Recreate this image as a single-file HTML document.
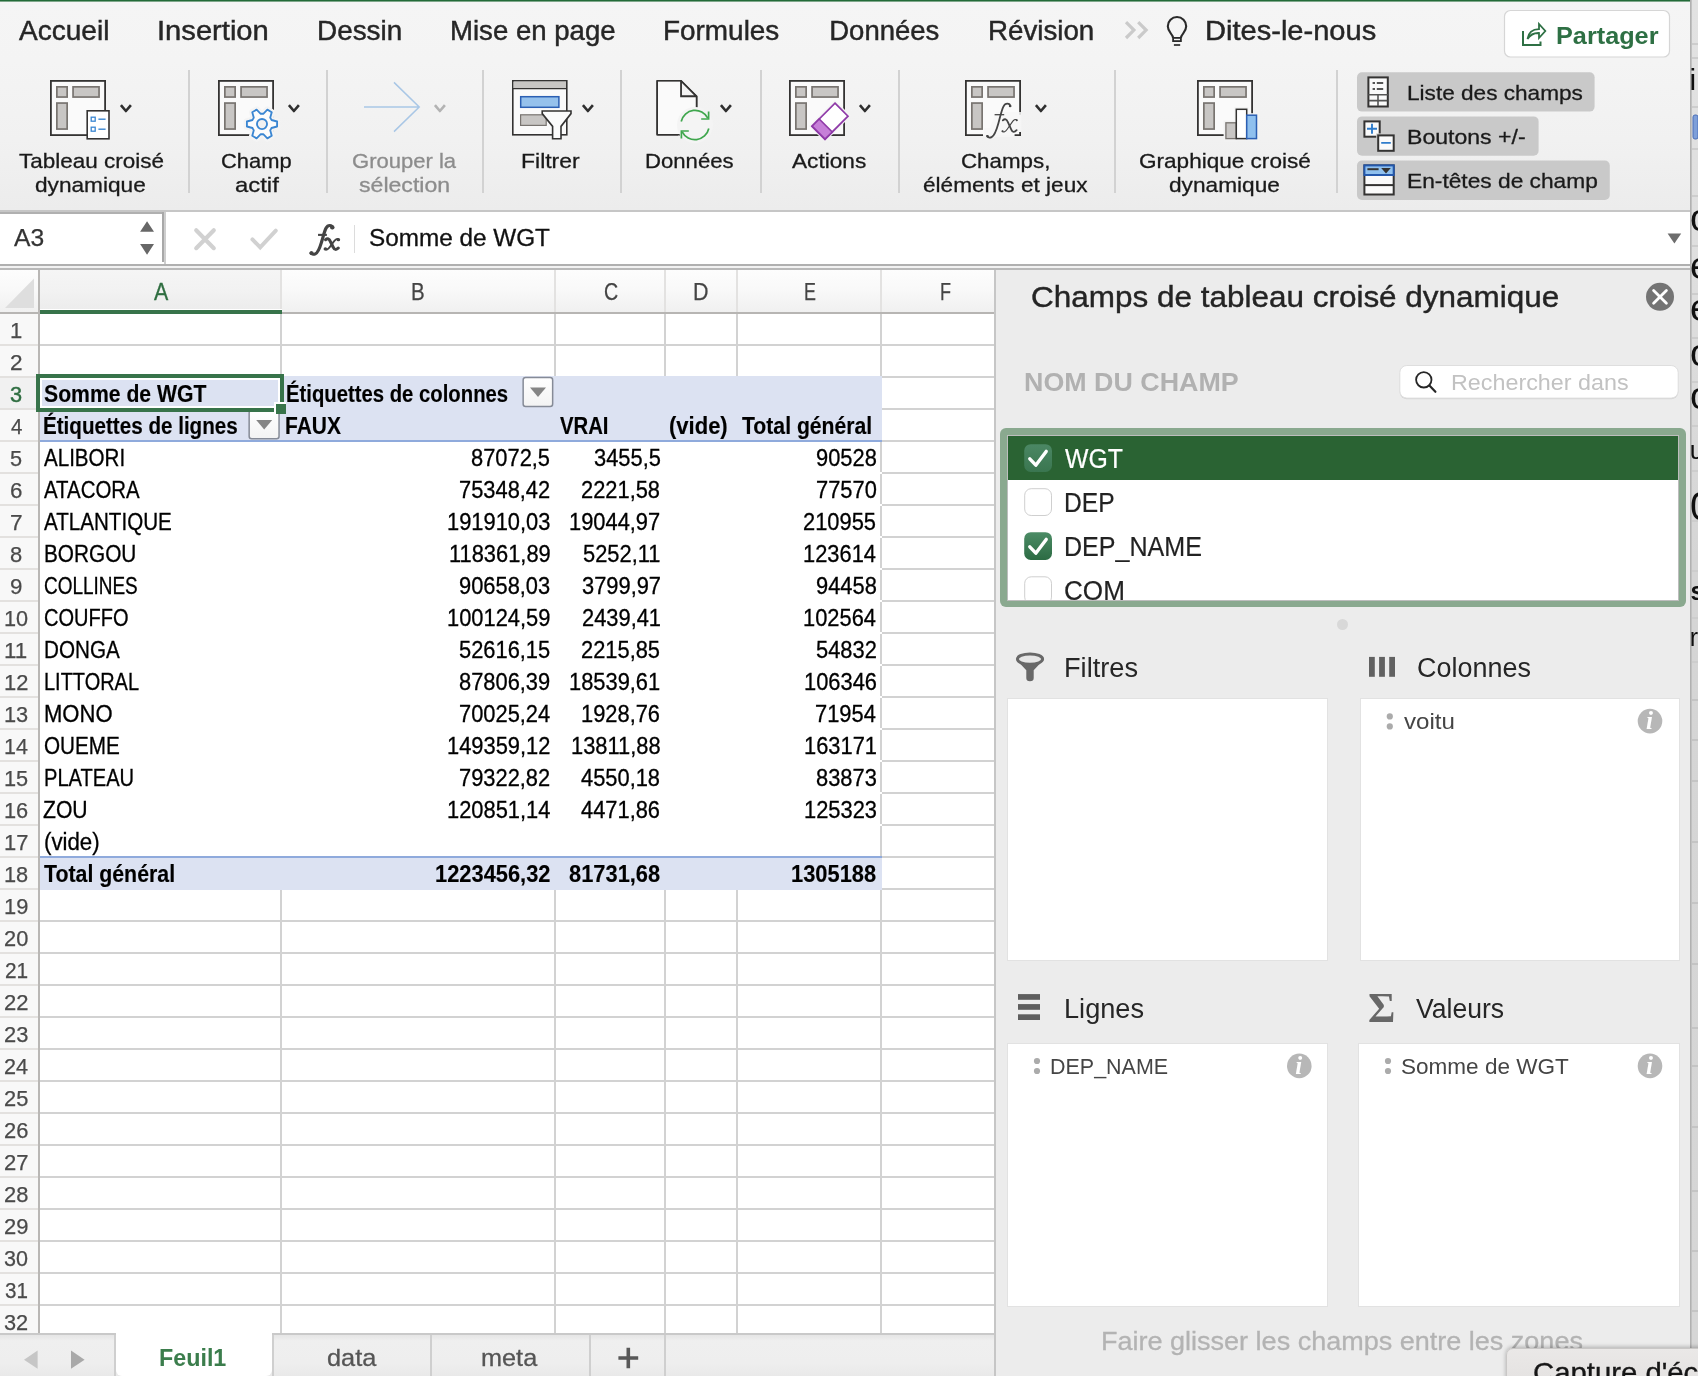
<!DOCTYPE html>
<html lang="fr"><head><meta charset="utf-8"><title>Excel</title>
<style>
html,body{margin:0;padding:0;}
body{width:1698px;height:1376px;overflow:hidden;background:#ececec;position:relative;font-family:"Liberation Sans",sans-serif;}
#root{position:absolute;left:0;top:0;width:1698px;height:1376px;overflow:hidden;will-change:transform;}
.a{position:absolute;box-sizing:border-box;}
.t{position:absolute;white-space:nowrap;line-height:1;transform-origin:0 0;font-family:"Liberation Sans",sans-serif;}
svg{overflow:visible;}
</style></head>
<body>
<div id="root">
<div class="a " style="left:1690px;top:0px;width:8px;height:1376px;background:linear-gradient(180deg,#e2e2e2 0px,#dedede 300px,#d5d5d5 560px,#d6d6d6 1376px);"></div>
<div class="a " style="left:1690px;top:0px;width:2px;height:1376px;background:linear-gradient(90deg,#a9a9a9,#c9c9c9);"></div>
<div class="a " style="left:0px;top:0px;width:1690px;height:211px;background:linear-gradient(180deg,#f5f5f5 0px,#f4f4f4 60px,#f1f1f1 140px,#ececec 209px);"></div>
<div class="a " style="left:0px;top:0px;width:1690px;height:1px;background:#236b39;"></div>
<div class="a " style="left:0px;top:1px;width:1690px;height:1px;background:#7fa88b;"></div>
<div class="a " style="left:0px;top:210px;width:1690px;height:2px;background:#c6c6c6;"></div>
<div class="a " style="left:0px;top:212px;width:1690px;height:52px;background:#ffffff;"></div>
<div class="a " style="left:0px;top:264px;width:1690px;height:2px;background:#b0b0b0;"></div>
<div class="a " style="left:0px;top:266px;width:1690px;height:2px;background:#f2f2f2;"></div>
<div class="a " style="left:0px;top:268px;width:1690px;height:2px;background:#b9b9b9;"></div>
<div class="a " style="left:0px;top:212px;width:164px;height:2px;background:#b0b0b0;"></div>
<div class="a " style="left:162px;top:212px;width:2px;height:50px;background:#a8a8a8;"></div>
<div class="a " style="left:164px;top:212px;width:2px;height:52px;background:#cecece;"></div>
<div class="a " style="left:354px;top:225px;width:1px;height:28px;background:#dcdcdc;"></div>
<div class="a " style="left:0px;top:270px;width:996px;height:1063px;background:#ffffff;"></div>
<div class="a " style="left:0px;top:270px;width:994px;height:42px;background:linear-gradient(180deg,#fdfdfd 0%,#f9f9f9 45%,#f0f0f0 100%);"></div>
<div class="a " style="left:40px;top:270px;width:240px;height:40px;background:linear-gradient(180deg,#f5f5f5 0%,#f2f2f2 50%,#ececec 100%);"></div>
<div class="a " style="left:0px;top:314px;width:38px;height:1019px;background:#f8f8f8;"></div>
<div class="a " style="left:0px;top:378px;width:38px;height:30px;background:#f1f1f1;"></div>
<div class="a " style="left:0px;top:344px;width:38px;height:2px;background:#e3e1df;"></div>
<div class="a " style="left:40px;top:344px;width:954px;height:2px;background:#d2d2d2;"></div>
<div class="a " style="left:0px;top:376px;width:38px;height:2px;background:#e3e1df;"></div>
<div class="a " style="left:40px;top:376px;width:954px;height:2px;background:#d2d2d2;"></div>
<div class="a " style="left:0px;top:408px;width:38px;height:2px;background:#e3e1df;"></div>
<div class="a " style="left:882px;top:408px;width:112px;height:2px;background:#d2d2d2;"></div>
<div class="a " style="left:0px;top:440px;width:38px;height:2px;background:#e3e1df;"></div>
<div class="a " style="left:882px;top:440px;width:112px;height:2px;background:#d2d2d2;"></div>
<div class="a " style="left:0px;top:472px;width:38px;height:2px;background:#e3e1df;"></div>
<div class="a " style="left:882px;top:472px;width:112px;height:2px;background:#d2d2d2;"></div>
<div class="a " style="left:0px;top:504px;width:38px;height:2px;background:#e3e1df;"></div>
<div class="a " style="left:882px;top:504px;width:112px;height:2px;background:#d2d2d2;"></div>
<div class="a " style="left:0px;top:536px;width:38px;height:2px;background:#e3e1df;"></div>
<div class="a " style="left:882px;top:536px;width:112px;height:2px;background:#d2d2d2;"></div>
<div class="a " style="left:0px;top:568px;width:38px;height:2px;background:#e3e1df;"></div>
<div class="a " style="left:882px;top:568px;width:112px;height:2px;background:#d2d2d2;"></div>
<div class="a " style="left:0px;top:600px;width:38px;height:2px;background:#e3e1df;"></div>
<div class="a " style="left:882px;top:600px;width:112px;height:2px;background:#d2d2d2;"></div>
<div class="a " style="left:0px;top:632px;width:38px;height:2px;background:#e3e1df;"></div>
<div class="a " style="left:882px;top:632px;width:112px;height:2px;background:#d2d2d2;"></div>
<div class="a " style="left:0px;top:664px;width:38px;height:2px;background:#e3e1df;"></div>
<div class="a " style="left:882px;top:664px;width:112px;height:2px;background:#d2d2d2;"></div>
<div class="a " style="left:0px;top:696px;width:38px;height:2px;background:#e3e1df;"></div>
<div class="a " style="left:882px;top:696px;width:112px;height:2px;background:#d2d2d2;"></div>
<div class="a " style="left:0px;top:728px;width:38px;height:2px;background:#e3e1df;"></div>
<div class="a " style="left:882px;top:728px;width:112px;height:2px;background:#d2d2d2;"></div>
<div class="a " style="left:0px;top:760px;width:38px;height:2px;background:#e3e1df;"></div>
<div class="a " style="left:882px;top:760px;width:112px;height:2px;background:#d2d2d2;"></div>
<div class="a " style="left:0px;top:792px;width:38px;height:2px;background:#e3e1df;"></div>
<div class="a " style="left:882px;top:792px;width:112px;height:2px;background:#d2d2d2;"></div>
<div class="a " style="left:0px;top:824px;width:38px;height:2px;background:#e3e1df;"></div>
<div class="a " style="left:882px;top:824px;width:112px;height:2px;background:#d2d2d2;"></div>
<div class="a " style="left:0px;top:856px;width:38px;height:2px;background:#e3e1df;"></div>
<div class="a " style="left:882px;top:856px;width:112px;height:2px;background:#d2d2d2;"></div>
<div class="a " style="left:0px;top:888px;width:38px;height:2px;background:#e3e1df;"></div>
<div class="a " style="left:40px;top:888px;width:954px;height:2px;background:#d2d2d2;"></div>
<div class="a " style="left:0px;top:920px;width:38px;height:2px;background:#e3e1df;"></div>
<div class="a " style="left:40px;top:920px;width:954px;height:2px;background:#d2d2d2;"></div>
<div class="a " style="left:0px;top:952px;width:38px;height:2px;background:#e3e1df;"></div>
<div class="a " style="left:40px;top:952px;width:954px;height:2px;background:#d2d2d2;"></div>
<div class="a " style="left:0px;top:984px;width:38px;height:2px;background:#e3e1df;"></div>
<div class="a " style="left:40px;top:984px;width:954px;height:2px;background:#d2d2d2;"></div>
<div class="a " style="left:0px;top:1016px;width:38px;height:2px;background:#e3e1df;"></div>
<div class="a " style="left:40px;top:1016px;width:954px;height:2px;background:#d2d2d2;"></div>
<div class="a " style="left:0px;top:1048px;width:38px;height:2px;background:#e3e1df;"></div>
<div class="a " style="left:40px;top:1048px;width:954px;height:2px;background:#d2d2d2;"></div>
<div class="a " style="left:0px;top:1080px;width:38px;height:2px;background:#e3e1df;"></div>
<div class="a " style="left:40px;top:1080px;width:954px;height:2px;background:#d2d2d2;"></div>
<div class="a " style="left:0px;top:1112px;width:38px;height:2px;background:#e3e1df;"></div>
<div class="a " style="left:40px;top:1112px;width:954px;height:2px;background:#d2d2d2;"></div>
<div class="a " style="left:0px;top:1144px;width:38px;height:2px;background:#e3e1df;"></div>
<div class="a " style="left:40px;top:1144px;width:954px;height:2px;background:#d2d2d2;"></div>
<div class="a " style="left:0px;top:1176px;width:38px;height:2px;background:#e3e1df;"></div>
<div class="a " style="left:40px;top:1176px;width:954px;height:2px;background:#d2d2d2;"></div>
<div class="a " style="left:0px;top:1208px;width:38px;height:2px;background:#e3e1df;"></div>
<div class="a " style="left:40px;top:1208px;width:954px;height:2px;background:#d2d2d2;"></div>
<div class="a " style="left:0px;top:1240px;width:38px;height:2px;background:#e3e1df;"></div>
<div class="a " style="left:40px;top:1240px;width:954px;height:2px;background:#d2d2d2;"></div>
<div class="a " style="left:0px;top:1272px;width:38px;height:2px;background:#e3e1df;"></div>
<div class="a " style="left:40px;top:1272px;width:954px;height:2px;background:#d2d2d2;"></div>
<div class="a " style="left:0px;top:1304px;width:38px;height:2px;background:#e3e1df;"></div>
<div class="a " style="left:40px;top:1304px;width:954px;height:2px;background:#d2d2d2;"></div>
<div class="a " style="left:280px;top:270px;width:2px;height:42px;background:#e3e2e1;"></div>
<div class="a " style="left:280px;top:314px;width:2px;height:62px;background:#d2d2d2;"></div>
<div class="a " style="left:280px;top:890px;width:2px;height:443px;background:#d2d2d2;"></div>
<div class="a " style="left:554px;top:270px;width:2px;height:42px;background:#e3e2e1;"></div>
<div class="a " style="left:554px;top:314px;width:2px;height:62px;background:#d2d2d2;"></div>
<div class="a " style="left:554px;top:890px;width:2px;height:443px;background:#d2d2d2;"></div>
<div class="a " style="left:664px;top:270px;width:2px;height:42px;background:#e3e2e1;"></div>
<div class="a " style="left:664px;top:314px;width:2px;height:62px;background:#d2d2d2;"></div>
<div class="a " style="left:664px;top:890px;width:2px;height:443px;background:#d2d2d2;"></div>
<div class="a " style="left:736px;top:270px;width:2px;height:42px;background:#e3e2e1;"></div>
<div class="a " style="left:736px;top:314px;width:2px;height:62px;background:#d2d2d2;"></div>
<div class="a " style="left:736px;top:890px;width:2px;height:443px;background:#d2d2d2;"></div>
<div class="a " style="left:880px;top:270px;width:2px;height:42px;background:#e3e2e1;"></div>
<div class="a " style="left:880px;top:314px;width:2px;height:62px;background:#d2d2d2;"></div>
<div class="a " style="left:880px;top:890px;width:2px;height:443px;background:#d2d2d2;"></div>
<div class="a " style="left:880px;top:442px;width:2px;height:416px;background:#d2d2d2;"></div>
<div class="a " style="left:880px;top:472px;width:2px;height:2px;background:#ffffff;"></div>
<div class="a " style="left:880px;top:504px;width:2px;height:2px;background:#ffffff;"></div>
<div class="a " style="left:880px;top:536px;width:2px;height:2px;background:#ffffff;"></div>
<div class="a " style="left:880px;top:568px;width:2px;height:2px;background:#ffffff;"></div>
<div class="a " style="left:880px;top:600px;width:2px;height:2px;background:#ffffff;"></div>
<div class="a " style="left:880px;top:632px;width:2px;height:2px;background:#ffffff;"></div>
<div class="a " style="left:880px;top:664px;width:2px;height:2px;background:#ffffff;"></div>
<div class="a " style="left:880px;top:696px;width:2px;height:2px;background:#ffffff;"></div>
<div class="a " style="left:880px;top:728px;width:2px;height:2px;background:#ffffff;"></div>
<div class="a " style="left:880px;top:760px;width:2px;height:2px;background:#ffffff;"></div>
<div class="a " style="left:880px;top:792px;width:2px;height:2px;background:#ffffff;"></div>
<div class="a " style="left:880px;top:824px;width:2px;height:2px;background:#ffffff;"></div>
<div class="a " style="left:0px;top:312px;width:994px;height:2px;background:#b7b5b3;"></div>
<div class="a " style="left:38px;top:270px;width:2px;height:1063px;background:#b9b7b5;"></div>
<div class="a " style="left:994px;top:270px;width:2px;height:1106px;background:#c6c6c6;"></div>
<svg class="a" style="left:0px;top:270px;" width="40" height="42" viewBox="0 0 40 42"><path d="M34 8.5 L34 38 L5 38 Z" fill="#dedede"/></svg>
<div class="a " style="left:40px;top:376px;width:842px;height:65px;background:#dce2f2;"></div>
<div class="a " style="left:40px;top:857px;width:842px;height:33px;background:#dce2f2;"></div>
<div class="a " style="left:40px;top:440px;width:842px;height:2px;background:#8faadc;"></div>
<div class="a " style="left:40px;top:856px;width:842px;height:2px;background:#8faadc;"></div>
<div class="a " style="left:40px;top:309px;width:242px;height:1px;background:#ffffff;"></div>
<div class="a " style="left:40px;top:310px;width:242px;height:4px;background:#37734a;"></div>
<div class="a " style="left:0px;top:1333px;width:994px;height:43px;background:linear-gradient(180deg,#e2e2e2 0px,#efefef 8px,#eeeeee 30px,#e9e9e9 43px);"></div>
<div class="a " style="left:0px;top:1333px;width:994px;height:2px;background:#c9c9c9;"></div>
<div class="a " style="left:116px;top:1333px;width:156px;height:43px;background:#ffffff;border-radius:0 0 6px 6px;"></div>
<div class="a " style="left:114px;top:1335px;width:2px;height:41px;background:#cfcfcf;"></div>
<div class="a " style="left:272px;top:1335px;width:2px;height:41px;background:#cfcfcf;"></div>
<div class="a " style="left:430px;top:1335px;width:2px;height:41px;background:#cfcfcf;"></div>
<div class="a " style="left:589px;top:1335px;width:2px;height:41px;background:#cfcfcf;"></div>
<div class="a " style="left:664px;top:1335px;width:2px;height:41px;background:#cfcfcf;"></div>
<div class="a " style="left:996px;top:270px;width:694px;height:1106px;background:#ececec;"></div>
<div class="a " style="left:1000px;top:428px;width:686px;height:179px;background:#8aa98f;border-radius:6px;"></div>
<div class="a " style="left:1007px;top:435px;width:672px;height:166px;background:#ffffff;border:1px solid #bdbdbd;"></div>
<div class="a " style="left:1008px;top:436px;width:670px;height:44px;background:#2a6333;"></div>
<div class="a " style="left:1007px;top:698px;width:321px;height:263px;background:#ffffff;border:1px solid #e2e2e2;"></div>
<div class="a " style="left:1360px;top:698px;width:320px;height:263px;background:#ffffff;border:1px solid #e2e2e2;"></div>
<div class="a " style="left:1007px;top:1043px;width:321px;height:264px;background:#ffffff;border:1px solid #e2e2e2;"></div>
<div class="a " style="left:1358px;top:1043px;width:322px;height:264px;background:#ffffff;border:1px solid #e2e2e2;"></div>
<div class="a " style="left:1337px;top:619px;width:11px;height:11px;background:#d8d8d8;border-radius:50%;"></div>
<svg class="a" style="left:0;top:0;pointer-events:none" width="1698" height="1376" viewBox="0 0 1698 1376"><path d="M1126 22.2 L1133.9 30.1 L1126 38 M1138.2 22.2 L1146.1 30.1 L1138.2 38" fill="none" stroke="#cacaca" stroke-width="3.2" stroke-linejoin="miter"/>
<path d="M1173.1 37.9 C1173.1 34 1167.8 32.6 1167.8 26.3 A9.2 9.2 0 1 1 1186.2 26.3 C1186.2 32.6 1180.9 34 1180.9 37.9" fill="none" stroke="#2a2a2a" stroke-width="2.1"/>
<rect x="1173.1" y="37.9" width="7.8" height="3.2" fill="none" stroke="#2a2a2a" stroke-width="1.8"/>
<path d="M1173.9 45 H1180.2" stroke="#2a2a2a" stroke-width="1.7" fill="none"/>
<rect x="1504.5" y="10.5" width="165" height="46.5" rx="6" fill="#ffffff" stroke="#d6d6d6" stroke-width="1.2"/>
<path d="M1523 31 V45 H1540.5 V41.5" fill="none" stroke="#2e7044" stroke-width="2"/>
<path d="M1527.5 39 C1528.5 32.5 1533 29.3 1539 29.2 V24 L1545.3 31 L1539 38 V33 C1534 32.8 1530.3 34.5 1527.5 39 Z" fill="none" stroke="#2e7044" stroke-width="1.8" stroke-linejoin="miter"/>
<rect x="188" y="70" width="2" height="123" fill="#d2d2d2"/>
<rect x="326" y="70" width="2" height="123" fill="#d2d2d2"/>
<rect x="482" y="70" width="2" height="123" fill="#d2d2d2"/>
<rect x="620" y="70" width="2" height="123" fill="#d2d2d2"/>
<rect x="760" y="70" width="2" height="123" fill="#d2d2d2"/>
<rect x="898" y="70" width="2" height="123" fill="#d2d2d2"/>
<rect x="1114" y="70" width="2" height="123" fill="#d2d2d2"/>
<rect x="1336" y="70" width="2" height="123" fill="#d2d2d2"/>
<rect x="50.9" y="80.9" width="54.2" height="54.2" fill="#fafafa"/>
<rect x="50.9" y="80.9" width="54.2" height="54.2" fill="none" stroke="#343332" stroke-width="1.8"/>
<rect x="56.85" y="86.85" width="10.3" height="10.2" fill="#c8c6c4" stroke="#787470" stroke-width="1.7"/>
<rect x="73.05" y="86.85" width="26" height="10.2" fill="#c8c6c4" stroke="#787470" stroke-width="1.7"/>
<rect x="56.85" y="103.05" width="10.3" height="26" fill="#c8c6c4" stroke="#787470" stroke-width="1.7"/>
<rect x="87.2" y="110.8" width="21.8" height="28" fill="#ffffff" stroke="#343332" stroke-width="1.6"/>
<rect x="91.2" y="117.2" width="4" height="4" fill="#fff" stroke="#3a86d2" stroke-width="1.3"/>
<path d="M98.4 119.2 H105.6" stroke="#3a86d2" stroke-width="1.4"/>
<rect x="91.2" y="127.2" width="4" height="4" fill="#fff" stroke="#3a86d2" stroke-width="1.3"/>
<path d="M98.4 129.2 H105.6" stroke="#3a86d2" stroke-width="1.4"/>
<path d="M120.9 105.1 L125.9 111 L130.9 105.1" fill="none" stroke="#2f2f2f" stroke-width="2.6" stroke-linecap="butt" stroke-linejoin="round"/>
<rect x="218.9" y="80.9" width="54.2" height="54.2" fill="#fafafa"/>
<rect x="218.9" y="80.9" width="54.2" height="54.2" fill="none" stroke="#343332" stroke-width="1.8"/>
<rect x="224.85" y="86.85" width="10.3" height="10.2" fill="#c8c6c4" stroke="#787470" stroke-width="1.7"/>
<rect x="241.05" y="86.85" width="26" height="10.2" fill="#c8c6c4" stroke="#787470" stroke-width="1.7"/>
<rect x="224.85" y="103.05" width="10.3" height="26" fill="#c8c6c4" stroke="#787470" stroke-width="1.7"/>
<path d="M271.49 119.99 L277.09 121.49 L277.09 126.51 L271.49 128.01 A10.3 10.3 0 0 1 270.22 130.21 L271.72 135.81 L267.37 138.33 L263.27 134.22 A10.3 10.3 0 0 1 260.73 134.22 L256.63 138.33 L252.28 135.81 L253.78 130.21 A10.3 10.3 0 0 1 252.51 128.01 L246.91 126.51 L246.91 121.49 L252.51 119.99 A10.3 10.3 0 0 1 253.78 117.79 L252.28 112.19 L256.63 109.67 L260.73 113.78 A10.3 10.3 0 0 1 263.27 113.78 L267.37 109.67 L271.72 112.19 L270.22 117.79 A10.3 10.3 0 0 1 271.49 119.99Z" fill="#f4f4f4" stroke="#f4f4f4" stroke-width="6.5" stroke-linejoin="round"/>
<path d="M271.49 119.99 L277.09 121.49 L277.09 126.51 L271.49 128.01 A10.3 10.3 0 0 1 270.22 130.21 L271.72 135.81 L267.37 138.33 L263.27 134.22 A10.3 10.3 0 0 1 260.73 134.22 L256.63 138.33 L252.28 135.81 L253.78 130.21 A10.3 10.3 0 0 1 252.51 128.01 L246.91 126.51 L246.91 121.49 L252.51 119.99 A10.3 10.3 0 0 1 253.78 117.79 L252.28 112.19 L256.63 109.67 L260.73 113.78 A10.3 10.3 0 0 1 263.27 113.78 L267.37 109.67 L271.72 112.19 L270.22 117.79 A10.3 10.3 0 0 1 271.49 119.99Z" fill="#fcfcfc" stroke="#3a86d2" stroke-width="1.85" stroke-linejoin="round"/>
<circle cx="262" cy="124" r="5.05" fill="#f1f1f1" stroke="#3a86d2" stroke-width="1.85"/>
<path d="M288.9 105.1 L293.9 111 L298.9 105.1" fill="none" stroke="#2f2f2f" stroke-width="2.6" stroke-linecap="butt" stroke-linejoin="round"/>
<path d="M364 107 H419 M394 82.4 L419.2 107 L394 131.6" fill="none" stroke="#a9c7e6" stroke-width="1.5"/>
<path d="M434.9 105.1 L439.9 111 L444.9 105.1" fill="none" stroke="#b3b3b3" stroke-width="2.6" stroke-linecap="butt" stroke-linejoin="round"/>
<rect x="512.8" y="80.8" width="54" height="54" fill="#fafafa" stroke="#343332" stroke-width="1.6"/>
<rect x="513.6" y="81.6" width="52.4" height="6.4" fill="#c8c6c4"/>
<path d="M512.8 88.6 H566.8" stroke="#343332" stroke-width="1.3"/>
<rect x="520.7" y="96.7" width="38.2" height="10.6" fill="#95c1ec" stroke="#2b5fb3" stroke-width="1.5"/>
<rect x="520.6" y="114.8" width="25.6" height="10.6" fill="#c8c6c4" stroke="#787470" stroke-width="1.2"/>
<path d="M542.2 111 H571 V113.6 L561 126.4 V138.8 H552.6 V126.4 L542.2 113.6 Z" fill="#fbfbfb" stroke="#343332" stroke-width="1.6" stroke-linejoin="miter"/>
<path d="M582.9 105.1 L587.9 111 L592.9 105.1" fill="none" stroke="#2f2f2f" stroke-width="2.6" stroke-linecap="butt" stroke-linejoin="round"/>
<path d="M657.2 80.8 H681 L696.6 96.4 V123 M681 80.8 V96.4 H696.6 M678 134.8 H657.2 V80.8" fill="none" stroke="#343332" stroke-width="1.6"/>
<path d="M658 81.6 H680.6 V96.8 H695.8 V134 H658 Z" fill="#fafafa"/>
<path d="M657.2 134.8 V80.8 H681 L696.6 96.4 V112 M681 80.8 V96.4 H696.6 M680 134.8 H657.2" fill="none" stroke="#343332" stroke-width="1.6"/>
<circle cx="695" cy="125" r="18" fill="#f4f4f4"/>
<path d="M681.2 121.5 A14.2 14.2 0 0 1 707.8 118.2" fill="none" stroke="#3fa64d" stroke-width="1.7"/>
<path d="M708.8 128.5 A14.2 14.2 0 0 1 682.2 131.8" fill="none" stroke="#3fa64d" stroke-width="1.7"/>
<path d="M708.6 111.6 V119 H701.2" fill="none" stroke="#3fa64d" stroke-width="1.7"/>
<path d="M681.4 138.4 V131 H688.8" fill="none" stroke="#3fa64d" stroke-width="1.7"/>
<path d="M720.9 105.1 L725.9 111 L730.9 105.1" fill="none" stroke="#2f2f2f" stroke-width="2.6" stroke-linecap="butt" stroke-linejoin="round"/>
<rect x="789.9" y="80.9" width="54.2" height="54.2" fill="#fafafa"/>
<rect x="789.9" y="80.9" width="54.2" height="54.2" fill="none" stroke="#343332" stroke-width="1.8"/>
<rect x="795.85" y="86.85" width="10.3" height="10.2" fill="#c8c6c4" stroke="#787470" stroke-width="1.7"/>
<rect x="812.05" y="86.85" width="26" height="10.2" fill="#c8c6c4" stroke="#787470" stroke-width="1.7"/>
<rect x="795.85" y="103.05" width="10.3" height="26" fill="#c8c6c4" stroke="#787470" stroke-width="1.7"/>
<path d="M835 100 L851 116 L825 142 L809 126 Z" fill="#f4f4f4"/>
<path d="M835 103.2 L848 116.2 L825 139.2 L812 126.2 Z" fill="#ffffff" stroke="#8f3aa8" stroke-width="1.7" stroke-linejoin="miter"/>
<path d="M819.2 119 L832.2 132 L825 139.2 L812 126.2 Z" fill="#c67fd8" stroke="#8f3aa8" stroke-width="1.7" stroke-linejoin="miter"/>
<path d="M859.9 105.1 L864.9 111 L869.9 105.1" fill="none" stroke="#2f2f2f" stroke-width="2.6" stroke-linecap="butt" stroke-linejoin="round"/>
<rect x="965.9" y="80.9" width="54.2" height="54.2" fill="#fafafa"/>
<path d="M983 135.1 H965.9 V80.9 H1020.1 V114.7 M1020.1 132 V135.1 H1014.6" fill="none" stroke="#343332" stroke-width="1.8"/>
<rect x="971.85" y="86.85" width="10.3" height="10.2" fill="#c8c6c4" stroke="#787470" stroke-width="1.7"/>
<rect x="988.05" y="86.85" width="26" height="10.2" fill="#c8c6c4" stroke="#787470" stroke-width="1.7"/>
<rect x="971.85" y="103.05" width="10.3" height="26" fill="#c8c6c4" stroke="#787470" stroke-width="1.7"/>
<path d="M996 112 H1021.5 V131 H1013 V137 H984 V128 H990 Z" fill="#f6f6f6" opacity="0.85"/>
<g><path d="M1010.4 106.2 C1009.8 103 1005.4 102.4 1003.4 106.6 C1001.4 110.8 1000.4 116 998.6 122.5 C996.8 129 995.2 135.4 991.6 137.1 C989.6 138 987.6 137.4 987.1 135.8" fill="none" stroke="#444444" stroke-width="1.785" stroke-linecap="round"/><circle cx="1010.1" cy="105.9" r="1.275" fill="#444444"/><circle cx="987.6" cy="136.2" r="1.19" fill="#444444"/><path d="M994.6 114.7 H1004.2" fill="none" stroke="#444444" stroke-width="1.275"/><path d="M1002.8 120.4 C1004.8 118.4 1006.8 119 1007.9 122.2 L1011.3 129.6 C1012.4 132.2 1014.4 132.6 1016.6 130.2" fill="none" stroke="#444444" stroke-width="1.785" stroke-linecap="round"/><path d="M1017 120.2 C1015.2 118.6 1013.6 120 1011.8 122.6 L1007.2 129.2 C1005.4 131.8 1003.6 132.8 1002.2 131.2" fill="none" stroke="#444444" stroke-width="1.105" stroke-linecap="round"/><circle cx="1016.7" cy="120.3" r="1.02" fill="#444444"/><circle cx="1002.6" cy="131.2" r="1.02" fill="#444444"/></g>
<g transform="translate(310.3 224.6) scale(0.92 0.85) translate(-986.2 -102.6)"><path d="M1010.4 106.2 C1009.8 103 1005.4 102.4 1003.4 106.6 C1001.4 110.8 1000.4 116 998.6 122.5 C996.8 129 995.2 135.4 991.6 137.1 C989.6 138 987.6 137.4 987.1 135.8" fill="none" stroke="#444444" stroke-width="3.465" stroke-linecap="round"/><circle cx="1010.1" cy="105.9" r="2.4749999999999996" fill="#444444"/><circle cx="987.6" cy="136.2" r="2.3099999999999996" fill="#444444"/><path d="M994.6 114.7 H1004.2" fill="none" stroke="#444444" stroke-width="2.4749999999999996"/><path d="M1002.8 120.4 C1004.8 118.4 1006.8 119 1007.9 122.2 L1011.3 129.6 C1012.4 132.2 1014.4 132.6 1016.6 130.2" fill="none" stroke="#444444" stroke-width="3.465" stroke-linecap="round"/><path d="M1017 120.2 C1015.2 118.6 1013.6 120 1011.8 122.6 L1007.2 129.2 C1005.4 131.8 1003.6 132.8 1002.2 131.2" fill="none" stroke="#444444" stroke-width="2.145" stroke-linecap="round"/><circle cx="1016.7" cy="120.3" r="1.9799999999999998" fill="#444444"/><circle cx="1002.6" cy="131.2" r="1.9799999999999998" fill="#444444"/></g>
<path d="M1035.9 105.1 L1040.9 111 L1045.9 105.1" fill="none" stroke="#2f2f2f" stroke-width="2.6" stroke-linecap="butt" stroke-linejoin="round"/>
<rect x="1197.9" y="80.9" width="54.2" height="54.2" fill="#fafafa"/>
<rect x="1197.9" y="80.9" width="54.2" height="54.2" fill="none" stroke="#343332" stroke-width="1.8"/>
<rect x="1203.85" y="86.85" width="10.3" height="10.2" fill="#c8c6c4" stroke="#787470" stroke-width="1.7"/>
<rect x="1220.05" y="86.85" width="26" height="10.2" fill="#c8c6c4" stroke="#787470" stroke-width="1.7"/>
<rect x="1203.85" y="103.05" width="10.3" height="26" fill="#c8c6c4" stroke="#787470" stroke-width="1.7"/>
<rect x="1223.6" y="120.6" width="14" height="21" fill="#f2f2f2"/><rect x="1234.4" y="107.2" width="14" height="34" fill="#f2f2f2"/><rect x="1246" y="113.2" width="13" height="28" fill="#f2f2f2"/>
<rect x="1225.9" y="122.8" width="10.4" height="15.8" fill="#c8c6c4" stroke="#787470" stroke-width="1.3"/>
<rect x="1236.3" y="109.3" width="10.4" height="29.3" fill="#ffffff" stroke="#343332" stroke-width="1.5"/>
<rect x="1246.7" y="115.2" width="9.8" height="23.4" fill="#8fc0ee" stroke="#2b5fb3" stroke-width="1.5"/>
<rect x="1357" y="72.2" width="237.6" height="39.4" rx="5" fill="#c9c9c9"/>
<rect x="1357" y="116.4" width="181.6" height="39.4" rx="5" fill="#c9c9c9"/>
<rect x="1357" y="160.5" width="252.8" height="39.4" rx="5" fill="#c9c9c9"/>
<rect x="1368.4" y="77.4" width="19.4" height="29.1" fill="#fafafa" stroke="#343332" stroke-width="2"/>
<path d="M1368.4 94.7 H1387.8 M1369 100.6 H1387.4 M1378 94.7 V106" stroke="#555" stroke-width="1.6" fill="none"/>
<path d="M1372.6 83 h2.4 M1376.8 83 h6.4 M1372.6 89 h2.4 M1376.8 89 h6.4" stroke="#555" stroke-width="1.8" fill="none"/>
<rect x="1364.4" y="121.4" width="15.3" height="15.3" fill="#fafafa" stroke="#343332" stroke-width="2"/>
<rect x="1376.2" y="133.4" width="19.5" height="19.4" fill="#c9c9c9"/>
<rect x="1378.2" y="135.4" width="15.5" height="15.4" fill="#fafafa" stroke="#343332" stroke-width="2"/>
<path d="M1367 128.8 h10 M1372 123.8 v10 M1381.2 142.9 h9.6" stroke="#2f7ccb" stroke-width="1.9" fill="none"/>
<rect x="1364.4" y="165.4" width="29.3" height="29.1" fill="#fafafa" stroke="#343332" stroke-width="2"/>
<rect x="1364.4" y="165.4" width="29.3" height="9.6" fill="#8fc0ee" stroke="#2458ac" stroke-width="2"/>
<path d="M1364.4 185.1 H1393.7" stroke="#343332" stroke-width="2"/>
<path d="M1367.4 169.2 H1378.6" stroke="#343332" stroke-width="2"/>
<path d="M1381.2 168 H1390.8 L1386 173.4 Z" fill="#343332"/>
<path d="M140.1 231.7 L147.05 221.3 L154 231.7 Z M140.1 244.1 L154 244.1 L147.05 254.8 Z" fill="#676767"/>
<path d="M196.2 230.2 L213.8 248.2 M213.8 230.2 L196.2 248.2" stroke="#d1d1d1" stroke-width="4.1" stroke-linecap="round" fill="none"/>
<path d="M252.4 239.4 L260.2 247.4 L275.8 230.6" stroke="#d1d1d1" stroke-width="3.9" stroke-linecap="round" stroke-linejoin="miter" fill="none"/>
<path d="M1667.6 233.6 H1681.2 L1674.4 243.4 Z" fill="#6d6d6d"/>
<defs><linearGradient id="ddg" x1="0" y1="0" x2="0" y2="1"><stop offset="0" stop-color="#ffffff"/><stop offset="1" stop-color="#f3f3f3"/></linearGradient><linearGradient id="cbg" x1="0" y1="0" x2="0" y2="1"><stop offset="0" stop-color="#4c8c66"/><stop offset="1" stop-color="#2c6b43"/></linearGradient><linearGradient id="cbg2" x1="0" y1="0" x2="0" y2="1"><stop offset="0" stop-color="#4b8764"/><stop offset="1" stop-color="#3a7650"/></linearGradient></defs>
<rect x="523.15" y="377.55" width="29.5" height="28.9" rx="2.5" fill="url(#ddg)" stroke="#868b97" stroke-width="1.5"/>
<path d="M530.0 387.4 H546.0 L538.0 397.0 Z" fill="#858585"/>
<rect x="249.15" y="410.25" width="29.9" height="28.5" rx="2.5" fill="url(#ddg)" stroke="#868b97" stroke-width="1.5"/>
<path d="M256.20000000000005 419.9 H272.20000000000005 L264.20000000000005 429.5 Z" fill="#858585"/>
<rect x="38" y="376" width="244" height="34" fill="none" stroke="#37734a" stroke-width="4"/>
<rect x="41" y="379" width="238" height="28" fill="none" stroke="#ffffff" stroke-width="2"/>
<rect x="274" y="402" width="12" height="12" fill="#ffffff"/><rect x="276" y="404" width="10" height="10" fill="#37734a"/>
<path d="M37.6 1350.6 V1368.8 L24 1359.7 Z" fill="#c6c6c6"/>
<path d="M71 1350.6 V1368.8 L84.6 1359.7 Z" fill="#a9a9a9"/>
<path d="M618.4 1358 H638.2 M628.3 1347.8 V1368.2" stroke="#585858" stroke-width="3.6" fill="none"/>
<circle cx="1660" cy="296.8" r="14" fill="#747474"/>
<path d="M1653.6 290.4 L1666.4 303.2 M1666.4 290.4 L1653.6 303.2" stroke="#ffffff" stroke-width="2.8" stroke-linecap="round"/>
<rect x="1399.8" y="366.2" width="278.4" height="33" rx="7" fill="#d6d6d6"/>
<rect x="1399.8" y="365.5" width="278.4" height="32.6" rx="7" fill="#ffffff" stroke="#dedede" stroke-width="1"/>
<circle cx="1423.8" cy="379.8" r="7.7" fill="none" stroke="#262626" stroke-width="1.8"/>
<path d="M1429.4 385.6 L1435.4 391.8" stroke="#262626" stroke-width="2.2" stroke-linecap="round"/>
<defs><clipPath id="listclip"><rect x="1008" y="436" width="670" height="164"/></clipPath></defs>
<rect x="1024.2" y="444.2" width="27.8" height="27.8" rx="6.5" fill="url(#cbg2)"/>
<path d="M1029.8 458.8 L1035.8 465.2 L1046.2 451.4" fill="none" stroke="#ffffff" stroke-width="3.4" stroke-linecap="round" stroke-linejoin="round"/>
<rect x="1024.7" y="488.7" width="26.8" height="26.8" rx="6.5" fill="#ffffff" stroke="#cfcfcf" stroke-width="1"/>
<rect x="1024.2" y="532.2" width="27.8" height="27.8" rx="6.5" fill="url(#cbg)"/>
<path d="M1029.8 546.8000000000001 L1035.8 553.2 L1046.2 539.4000000000001" fill="none" stroke="#ffffff" stroke-width="3.4" stroke-linecap="round" stroke-linejoin="round"/>
<rect x="1024.7" y="576.8" width="26.8" height="26.8" rx="6.5" fill="#ffffff" stroke="#cfcfcf" stroke-width="1" clip-path="url(#listclip)"/>
<path d="M1016.2 659.4 L1026.3 670.2 V678 Q1026.3 681.3 1030 681.3 Q1033.7 681.3 1033.7 678 V670.2 L1043.8 659.4 Z" fill="#686868"/>
<ellipse cx="1030" cy="659.1" rx="12.6" ry="5.2" fill="#e6e6e6" stroke="#686868" stroke-width="3"/>
<rect x="1369" y="656.9" width="5.8" height="19.9" fill="#616161"/>
<rect x="1379.1" y="656.9" width="5.8" height="19.9" fill="#616161"/>
<rect x="1389.2" y="656.9" width="5.8" height="19.9" fill="#616161"/>
<rect x="1018" y="994.1" width="22" height="5.7" fill="#5e5e5e"/>
<rect x="1018" y="1004.1" width="22" height="5.7" fill="#5e5e5e"/>
<rect x="1018" y="1014.3" width="22" height="5.7" fill="#5e5e5e"/>
<circle cx="1389.8" cy="716.4" r="3.1" fill="#ababab"/><circle cx="1389.8" cy="726.4" r="3.1" fill="#ababab"/>
<circle cx="1037" cy="1061" r="3.1" fill="#ababab"/><circle cx="1037" cy="1071" r="3.1" fill="#ababab"/>
<circle cx="1388" cy="1061" r="3.1" fill="#ababab"/><circle cx="1388" cy="1071" r="3.1" fill="#ababab"/>
<circle cx="1650" cy="721.1" r="12.3" fill="#b7b7b7"/>
<circle cx="1299.3" cy="1065.9" r="12.3" fill="#b7b7b7"/>
<circle cx="1650" cy="1065.9" r="12.3" fill="#b7b7b7"/>
<rect x="1692" y="43" width="6" height="2" fill="#cdcdcd"/>
<rect x="1692" y="57" width="6" height="2" fill="#cdcdcd"/>
<rect x="1692" y="106" width="6" height="2" fill="#cdcdcd"/>
<rect x="1692" y="148" width="6" height="2" fill="#cdcdcd"/>
<rect x="1692" y="195" width="6" height="2" fill="#cdcdcd"/>
<rect x="1692" y="245" width="6" height="2" fill="#cdcdcd"/>
<rect x="1692" y="293" width="6" height="2" fill="#cdcdcd"/>
<rect x="1692" y="337" width="6" height="2" fill="#cdcdcd"/>
<rect x="1692" y="381" width="6" height="2" fill="#cdcdcd"/>
<rect x="1692" y="425" width="6" height="2" fill="#cdcdcd"/>
<rect x="1692" y="470" width="6" height="2" fill="#cdcdcd"/>
<rect x="1692" y="520" width="6" height="2" fill="#cdcdcd"/>
<rect x="1692" y="570" width="6" height="2" fill="#cdcdcd"/>
<rect x="1692" y="617" width="6" height="2" fill="#cdcdcd"/>
<rect x="1692" y="661" width="6" height="2" fill="#cdcdcd"/>
<rect x="1692" y="699" width="6" height="2" fill="#c4c4c4"/>
<rect x="1692" y="739" width="6" height="2" fill="#c4c4c4"/>
<rect x="1692" y="780" width="6" height="2" fill="#c4c4c4"/>
<rect x="1692" y="841" width="6" height="2" fill="#c4c4c4"/>
<rect x="1692" y="902" width="6" height="2" fill="#c4c4c4"/>
<rect x="1692" y="963" width="6" height="2" fill="#c4c4c4"/>
<rect x="1692" y="1027" width="6" height="2" fill="#c4c4c4"/>
<rect x="1692" y="1065" width="6" height="2" fill="#c4c4c4"/>
<rect x="1692" y="1126" width="6" height="2" fill="#c4c4c4"/>
<rect x="1692" y="1190" width="6" height="2" fill="#c4c4c4"/>
<rect x="1692" y="1250" width="6" height="2" fill="#c4c4c4"/>
<rect x="1692" y="1310" width="6" height="2" fill="#c4c4c4"/>
<rect x="1693" y="115" width="5" height="24" rx="2" fill="#7e9fd9" stroke="#4a6fb8" stroke-width="1"/></svg>
<span class="t" style="left:1645.96px;top:708.00px;font-size:25.0px;color:#ffffff;font-family:'Liberation Serif',serif;font-weight:700;font-style:italic;">i</span>
<span class="t" style="left:1295.26px;top:1053.00px;font-size:25.0px;color:#ffffff;font-family:'Liberation Serif',serif;font-weight:700;font-style:italic;">i</span>
<span class="t" style="left:1645.96px;top:1053.00px;font-size:25.0px;color:#ffffff;font-family:'Liberation Serif',serif;font-weight:700;font-style:italic;">i</span>
<span class="t" style="left:1689.49px;top:65.00px;font-size:30.0px;color:#101010;">i</span>
<span class="t" style="left:1689.90px;top:199.00px;font-size:38.0px;color:#101010;">o</span>
<span class="t" style="left:1689.89px;top:247.00px;font-size:38.0px;color:#101010;">e</span>
<span class="t" style="left:1689.89px;top:289.00px;font-size:38.0px;color:#101010;">e</span>
<span class="t" style="left:1689.90px;top:334.00px;font-size:38.0px;color:#101010;">o</span>
<span class="t" style="left:1689.90px;top:377.00px;font-size:38.0px;color:#101010;">o</span>
<span class="t" style="left:1689.81px;top:437.00px;font-size:26.0px;color:#101010;">u</span>
<span class="t" style="left:1689.94px;top:486.00px;font-size:40.0px;color:#101010;">0</span>
<span class="t" style="left:1690.62px;top:579.00px;font-size:25.0px;color:#101010;font-weight:700;">s</span>
<span class="t" style="left:1689.84px;top:625.00px;font-size:25.0px;color:#101010;">r</span>
<span class="t" style="left:19.05px;top:17.00px;font-size:27.5px;color:#262626;transform:scaleX(1.0201);-webkit-text-stroke:0.45px #262626;">Accueil</span>
<span class="t" style="left:156.51px;top:17.00px;font-size:27.5px;color:#262626;transform:scaleX(1.0599);-webkit-text-stroke:0.45px #262626;">Insertion</span>
<span class="t" style="left:317.11px;top:17.00px;font-size:27.5px;color:#262626;transform:scaleX(1.0136);-webkit-text-stroke:0.45px #262626;">Dessin</span>
<span class="t" style="left:449.94px;top:17.00px;font-size:27.5px;color:#262626;transform:scaleX(1.0030);-webkit-text-stroke:0.45px #262626;">Mise en page</span>
<span class="t" style="left:663.41px;top:17.00px;font-size:27.5px;color:#262626;transform:scaleX(1.0148);-webkit-text-stroke:0.45px #262626;">Formules</span>
<span class="t" style="left:829.24px;top:17.00px;font-size:27.5px;color:#262626;-webkit-text-stroke:0.45px #262626;">Données</span>
<span class="t" style="left:987.73px;top:17.00px;font-size:27.5px;color:#262626;transform:scaleX(1.0077);-webkit-text-stroke:0.45px #262626;">Révision</span>
<span class="t" style="left:1205.32px;top:17.00px;font-size:27.5px;color:#262626;transform:scaleX(1.0570);-webkit-text-stroke:0.45px #262626;">Dites-le-nous</span>
<span class="t" style="left:1555.71px;top:24.00px;font-size:24.0px;color:#2e7044;font-weight:700;transform:scaleX(1.0523);">Partager</span>
<span class="t" style="left:18.50px;top:150.00px;font-size:21.0px;color:#1a1a1a;transform:scaleX(1.0702);-webkit-text-stroke:0.3px #1a1a1a;">Tableau croisé</span>
<span class="t" style="left:34.65px;top:174.00px;font-size:21.0px;color:#1a1a1a;transform:scaleX(1.0782);-webkit-text-stroke:0.3px #1a1a1a;">dynamique</span>
<span class="t" style="left:221.29px;top:150.00px;font-size:21.0px;color:#1a1a1a;transform:scaleX(1.0434);-webkit-text-stroke:0.3px #1a1a1a;">Champ</span>
<span class="t" style="left:234.59px;top:174.00px;font-size:21.0px;color:#1a1a1a;transform:scaleX(1.1368);-webkit-text-stroke:0.3px #1a1a1a;">actif</span>
<span class="t" style="left:351.89px;top:150.00px;font-size:21.0px;color:#8c8c8c;transform:scaleX(1.0494);-webkit-text-stroke:0.3px #8c8c8c;">Grouper la</span>
<span class="t" style="left:359.36px;top:174.00px;font-size:21.0px;color:#8c8c8c;transform:scaleX(1.0997);-webkit-text-stroke:0.3px #8c8c8c;">sélection</span>
<span class="t" style="left:521.12px;top:150.00px;font-size:21.0px;color:#1a1a1a;transform:scaleX(1.0934);-webkit-text-stroke:0.3px #1a1a1a;">Filtrer</span>
<span class="t" style="left:645.18px;top:150.00px;font-size:21.0px;color:#1a1a1a;transform:scaleX(1.0543);-webkit-text-stroke:0.3px #1a1a1a;">Données</span>
<span class="t" style="left:791.56px;top:150.00px;font-size:21.0px;color:#1a1a1a;transform:scaleX(1.0784);-webkit-text-stroke:0.3px #1a1a1a;">Actions</span>
<span class="t" style="left:960.67px;top:150.00px;font-size:21.0px;color:#1a1a1a;transform:scaleX(1.0632);-webkit-text-stroke:0.3px #1a1a1a;">Champs,</span>
<span class="t" style="left:922.94px;top:174.00px;font-size:21.0px;color:#1a1a1a;transform:scaleX(1.0758);-webkit-text-stroke:0.3px #1a1a1a;">éléments et jeux</span>
<span class="t" style="left:1138.67px;top:150.00px;font-size:21.0px;color:#1a1a1a;transform:scaleX(1.0740);-webkit-text-stroke:0.3px #1a1a1a;">Graphique croisé</span>
<span class="t" style="left:1169.45px;top:174.00px;font-size:21.0px;color:#1a1a1a;transform:scaleX(1.0792);-webkit-text-stroke:0.3px #1a1a1a;">dynamique</span>
<span class="t" style="left:1406.95px;top:82.00px;font-size:21.0px;color:#1a1a1a;transform:scaleX(1.0763);-webkit-text-stroke:0.3px #1a1a1a;">Liste des champs</span>
<span class="t" style="left:1406.91px;top:126.00px;font-size:21.0px;color:#1a1a1a;transform:scaleX(1.0985);-webkit-text-stroke:0.3px #1a1a1a;">Boutons +/-</span>
<span class="t" style="left:1406.93px;top:170.00px;font-size:21.0px;color:#1a1a1a;transform:scaleX(1.0827);-webkit-text-stroke:0.3px #1a1a1a;">En-têtes de champ</span>
<span class="t" style="left:14.05px;top:226.00px;font-size:24.0px;color:#333;transform:scaleX(1.0264);-webkit-text-stroke:0.25px #333;">A3</span>
<span class="t" style="left:369.20px;top:227.00px;font-size:23.5px;color:#111;transform:scaleX(1.0337);-webkit-text-stroke:0.3px #111;">Somme de WGT</span>
<span class="t" style="left:153.86px;top:281.00px;font-size:23.0px;color:#2f6e41;transform:scaleX(0.9310);-webkit-text-stroke:0.3px #2f6e41;">A</span>
<span class="t" style="left:411.47px;top:281.00px;font-size:23.0px;color:#444;transform:scaleX(0.8904);-webkit-text-stroke:0.25px #444;">B</span>
<span class="t" style="left:603.51px;top:281.00px;font-size:23.0px;color:#444;transform:scaleX(0.8513);-webkit-text-stroke:0.25px #444;">C</span>
<span class="t" style="left:693.39px;top:281.00px;font-size:23.0px;color:#444;transform:scaleX(0.9322);-webkit-text-stroke:0.25px #444;">D</span>
<span class="t" style="left:803.88px;top:281.00px;font-size:23.0px;color:#444;transform:scaleX(0.7781);-webkit-text-stroke:0.25px #444;">E</span>
<span class="t" style="left:939.62px;top:281.00px;font-size:23.0px;color:#444;transform:scaleX(0.7829);-webkit-text-stroke:0.25px #444;">F</span>
<span class="t" style="left:9.97px;top:320.00px;font-size:22.5px;color:#4a4a4a;transform:scaleX(0.9794);-webkit-text-stroke:0.25px #4a4a4a;">1</span>
<span class="t" style="left:9.91px;top:352.00px;font-size:22.5px;color:#4a4a4a;transform:scaleX(1.0050);-webkit-text-stroke:0.25px #4a4a4a;">2</span>
<span class="t" style="left:10.22px;top:384.00px;font-size:22.5px;color:#2f6e41;transform:scaleX(0.9656);-webkit-text-stroke:0.45px #2f6e41;">3</span>
<span class="t" style="left:10.58px;top:416.00px;font-size:22.5px;color:#4a4a4a;transform:scaleX(0.9086);-webkit-text-stroke:0.25px #4a4a4a;">4</span>
<span class="t" style="left:10.18px;top:448.00px;font-size:22.5px;color:#4a4a4a;transform:scaleX(0.9656);-webkit-text-stroke:0.25px #4a4a4a;">5</span>
<span class="t" style="left:9.92px;top:480.00px;font-size:22.5px;color:#4a4a4a;transform:scaleX(0.9922);-webkit-text-stroke:0.25px #4a4a4a;">6</span>
<span class="t" style="left:9.89px;top:512.00px;font-size:22.5px;color:#4a4a4a;transform:scaleX(1.0071);-webkit-text-stroke:0.25px #4a4a4a;">7</span>
<span class="t" style="left:10.10px;top:544.00px;font-size:22.5px;color:#4a4a4a;transform:scaleX(0.9757);-webkit-text-stroke:0.25px #4a4a4a;">8</span>
<span class="t" style="left:10.00px;top:576.00px;font-size:22.5px;color:#4a4a4a;transform:scaleX(0.9912);-webkit-text-stroke:0.25px #4a4a4a;">9</span>
<span class="t" style="left:3.75px;top:608.00px;font-size:22.5px;color:#4a4a4a;transform:scaleX(0.9629);-webkit-text-stroke:0.25px #4a4a4a;">10</span>
<span class="t" style="left:4.30px;top:640.00px;font-size:22.5px;color:#4a4a4a;transform:scaleX(0.9931);-webkit-text-stroke:0.25px #4a4a4a;">11</span>
<span class="t" style="left:3.73px;top:672.00px;font-size:22.5px;color:#4a4a4a;transform:scaleX(0.9739);-webkit-text-stroke:0.25px #4a4a4a;">12</span>
<span class="t" style="left:3.74px;top:704.00px;font-size:22.5px;color:#4a4a4a;transform:scaleX(0.9677);-webkit-text-stroke:0.25px #4a4a4a;">13</span>
<span class="t" style="left:3.77px;top:736.00px;font-size:22.5px;color:#4a4a4a;transform:scaleX(0.9536);-webkit-text-stroke:0.25px #4a4a4a;">14</span>
<span class="t" style="left:3.74px;top:768.00px;font-size:22.5px;color:#4a4a4a;transform:scaleX(0.9658);-webkit-text-stroke:0.25px #4a4a4a;">15</span>
<span class="t" style="left:3.74px;top:800.00px;font-size:22.5px;color:#4a4a4a;transform:scaleX(0.9677);-webkit-text-stroke:0.25px #4a4a4a;">16</span>
<span class="t" style="left:3.73px;top:832.00px;font-size:22.5px;color:#4a4a4a;transform:scaleX(0.9739);-webkit-text-stroke:0.25px #4a4a4a;">17</span>
<span class="t" style="left:3.74px;top:864.00px;font-size:22.5px;color:#4a4a4a;transform:scaleX(0.9672);-webkit-text-stroke:0.25px #4a4a4a;">18</span>
<span class="t" style="left:3.74px;top:896.00px;font-size:22.5px;color:#4a4a4a;transform:scaleX(0.9710);-webkit-text-stroke:0.25px #4a4a4a;">19</span>
<span class="t" style="left:3.95px;top:928.00px;font-size:22.5px;color:#4a4a4a;transform:scaleX(0.9690);-webkit-text-stroke:0.25px #4a4a4a;">20</span>
<span class="t" style="left:4.60px;top:960.00px;font-size:22.5px;color:#4a4a4a;transform:scaleX(0.9257);-webkit-text-stroke:0.25px #4a4a4a;">21</span>
<span class="t" style="left:3.94px;top:992.00px;font-size:22.5px;color:#4a4a4a;transform:scaleX(0.9797);-webkit-text-stroke:0.25px #4a4a4a;">22</span>
<span class="t" style="left:3.95px;top:1024.00px;font-size:22.5px;color:#4a4a4a;transform:scaleX(0.9736);-webkit-text-stroke:0.25px #4a4a4a;">23</span>
<span class="t" style="left:3.96px;top:1056.00px;font-size:22.5px;color:#4a4a4a;transform:scaleX(0.9598);-webkit-text-stroke:0.25px #4a4a4a;">24</span>
<span class="t" style="left:3.95px;top:1088.00px;font-size:22.5px;color:#4a4a4a;transform:scaleX(0.9718);-webkit-text-stroke:0.25px #4a4a4a;">25</span>
<span class="t" style="left:3.95px;top:1120.00px;font-size:22.5px;color:#4a4a4a;transform:scaleX(0.9736);-webkit-text-stroke:0.25px #4a4a4a;">26</span>
<span class="t" style="left:3.94px;top:1152.00px;font-size:22.5px;color:#4a4a4a;transform:scaleX(0.9797);-webkit-text-stroke:0.25px #4a4a4a;">27</span>
<span class="t" style="left:3.95px;top:1184.00px;font-size:22.5px;color:#4a4a4a;transform:scaleX(0.9732);-webkit-text-stroke:0.25px #4a4a4a;">28</span>
<span class="t" style="left:3.94px;top:1216.00px;font-size:22.5px;color:#4a4a4a;transform:scaleX(0.9769);-webkit-text-stroke:0.25px #4a4a4a;">29</span>
<span class="t" style="left:4.23px;top:1248.00px;font-size:22.5px;color:#4a4a4a;transform:scaleX(0.9576);-webkit-text-stroke:0.25px #4a4a4a;">30</span>
<span class="t" style="left:4.87px;top:1280.00px;font-size:22.5px;color:#4a4a4a;transform:scaleX(0.9147);-webkit-text-stroke:0.25px #4a4a4a;">31</span>
<span class="t" style="left:4.22px;top:1312.00px;font-size:22.5px;color:#4a4a4a;transform:scaleX(0.9681);-webkit-text-stroke:0.25px #4a4a4a;">32</span>
<span class="t" style="left:43.59px;top:383.00px;font-size:23.0px;color:#000;font-weight:700;transform:scaleX(0.9211);-webkit-text-stroke:0.15px #000;">Somme de WGT</span>
<span class="t" style="left:285.74px;top:383.00px;font-size:23.0px;color:#000;font-weight:700;transform:scaleX(0.8822);-webkit-text-stroke:0.15px #000;">Étiquettes de colonnes</span>
<span class="t" style="left:42.82px;top:415.00px;font-size:23.0px;color:#000;font-weight:700;transform:scaleX(0.8963);-webkit-text-stroke:0.15px #000;">Étiquettes de lignes</span>
<span class="t" style="left:285.30px;top:415.00px;font-size:23.0px;color:#000;font-weight:700;transform:scaleX(0.9111);-webkit-text-stroke:0.15px #000;">FAUX</span>
<span class="t" style="left:560.36px;top:415.00px;font-size:23.0px;color:#000;font-weight:700;transform:scaleX(0.8825);-webkit-text-stroke:0.15px #000;">VRAI</span>
<span class="t" style="left:669.40px;top:415.00px;font-size:23.0px;color:#000;font-weight:700;transform:scaleX(0.9569);-webkit-text-stroke:0.15px #000;">(vide)</span>
<span class="t" style="left:742.26px;top:415.00px;font-size:23.0px;color:#000;font-weight:700;transform:scaleX(0.9209);-webkit-text-stroke:0.15px #000;">Total général</span>
<span class="t" style="left:44.06px;top:447.00px;font-size:23.0px;color:#000;transform:scaleX(0.8941);-webkit-text-stroke:0.3px #000;">ALIBORI</span>
<span class="t" style="left:471.40px;top:447.00px;font-size:23.0px;color:#000;transform:scaleX(0.9505);-webkit-text-stroke:0.3px #000;">87072,5</span>
<span class="t" style="left:593.56px;top:447.00px;font-size:23.0px;color:#000;transform:scaleX(0.9505);-webkit-text-stroke:0.3px #000;">3455,5</span>
<span class="t" style="left:815.66px;top:447.00px;font-size:23.0px;color:#000;transform:scaleX(0.9505);-webkit-text-stroke:0.3px #000;">90528</span>
<span class="t" style="left:44.06px;top:479.00px;font-size:23.0px;color:#000;transform:scaleX(0.8869);-webkit-text-stroke:0.3px #000;">ATACORA</span>
<span class="t" style="left:459.42px;top:479.00px;font-size:23.0px;color:#000;transform:scaleX(0.9505);-webkit-text-stroke:0.3px #000;">75348,42</span>
<span class="t" style="left:581.43px;top:479.00px;font-size:23.0px;color:#000;transform:scaleX(0.9505);-webkit-text-stroke:0.3px #000;">2221,58</span>
<span class="t" style="left:815.57px;top:479.00px;font-size:23.0px;color:#000;transform:scaleX(0.9505);-webkit-text-stroke:0.3px #000;">77570</span>
<span class="t" style="left:44.06px;top:511.00px;font-size:23.0px;color:#000;transform:scaleX(0.8957);-webkit-text-stroke:0.3px #000;">ATLANTIQUE</span>
<span class="t" style="left:447.13px;top:511.00px;font-size:23.0px;color:#000;transform:scaleX(0.9505);-webkit-text-stroke:0.3px #000;">191910,03</span>
<span class="t" style="left:569.42px;top:511.00px;font-size:23.0px;color:#000;transform:scaleX(0.9505);-webkit-text-stroke:0.3px #000;">19044,97</span>
<span class="t" style="left:803.47px;top:511.00px;font-size:23.0px;color:#000;transform:scaleX(0.9505);-webkit-text-stroke:0.3px #000;">210955</span>
<span class="t" style="left:43.70px;top:543.00px;font-size:23.0px;color:#000;transform:scaleX(0.9029);-webkit-text-stroke:0.3px #000;">BORGOU</span>
<span class="t" style="left:448.82px;top:543.00px;font-size:23.0px;color:#000;transform:scaleX(0.9505);-webkit-text-stroke:0.3px #000;">118361,89</span>
<span class="t" style="left:583.17px;top:543.00px;font-size:23.0px;color:#000;transform:scaleX(0.9505);-webkit-text-stroke:0.3px #000;">5252,11</span>
<span class="t" style="left:803.19px;top:543.00px;font-size:23.0px;color:#000;transform:scaleX(0.9505);-webkit-text-stroke:0.3px #000;">123614</span>
<span class="t" style="left:43.94px;top:575.00px;font-size:23.0px;color:#000;transform:scaleX(0.8239);-webkit-text-stroke:0.3px #000;">COLLINES</span>
<span class="t" style="left:459.28px;top:575.00px;font-size:23.0px;color:#000;transform:scaleX(0.9505);-webkit-text-stroke:0.3px #000;">90658,03</span>
<span class="t" style="left:581.58px;top:575.00px;font-size:23.0px;color:#000;transform:scaleX(0.9505);-webkit-text-stroke:0.3px #000;">3799,97</span>
<span class="t" style="left:815.66px;top:575.00px;font-size:23.0px;color:#000;transform:scaleX(0.9505);-webkit-text-stroke:0.3px #000;">94458</span>
<span class="t" style="left:43.88px;top:607.00px;font-size:23.0px;color:#000;transform:scaleX(0.8700);-webkit-text-stroke:0.3px #000;">COUFFO</span>
<span class="t" style="left:447.20px;top:607.00px;font-size:23.0px;color:#000;transform:scaleX(0.9505);-webkit-text-stroke:0.3px #000;">100124,59</span>
<span class="t" style="left:581.55px;top:607.00px;font-size:23.0px;color:#000;transform:scaleX(0.9505);-webkit-text-stroke:0.3px #000;">2439,41</span>
<span class="t" style="left:803.19px;top:607.00px;font-size:23.0px;color:#000;transform:scaleX(0.9505);-webkit-text-stroke:0.3px #000;">102564</span>
<span class="t" style="left:44.01px;top:639.00px;font-size:23.0px;color:#000;transform:scaleX(0.8979);-webkit-text-stroke:0.3px #000;">DONGA</span>
<span class="t" style="left:459.24px;top:639.00px;font-size:23.0px;color:#000;transform:scaleX(0.9505);-webkit-text-stroke:0.3px #000;">52616,15</span>
<span class="t" style="left:581.40px;top:639.00px;font-size:23.0px;color:#000;transform:scaleX(0.9505);-webkit-text-stroke:0.3px #000;">2215,85</span>
<span class="t" style="left:815.81px;top:639.00px;font-size:23.0px;color:#000;transform:scaleX(0.9505);-webkit-text-stroke:0.3px #000;">54832</span>
<span class="t" style="left:43.76px;top:671.00px;font-size:23.0px;color:#000;transform:scaleX(0.8676);-webkit-text-stroke:0.3px #000;">LITTORAL</span>
<span class="t" style="left:459.36px;top:671.00px;font-size:23.0px;color:#000;transform:scaleX(0.9505);-webkit-text-stroke:0.3px #000;">87806,39</span>
<span class="t" style="left:569.39px;top:671.00px;font-size:23.0px;color:#000;transform:scaleX(0.9505);-webkit-text-stroke:0.3px #000;">18539,61</span>
<span class="t" style="left:803.51px;top:671.00px;font-size:23.0px;color:#000;transform:scaleX(0.9505);-webkit-text-stroke:0.3px #000;">106346</span>
<span class="t" style="left:43.59px;top:703.00px;font-size:23.0px;color:#000;transform:scaleX(0.9583);-webkit-text-stroke:0.3px #000;">MONO</span>
<span class="t" style="left:458.96px;top:703.00px;font-size:23.0px;color:#000;transform:scaleX(0.9505);-webkit-text-stroke:0.3px #000;">70025,24</span>
<span class="t" style="left:581.44px;top:703.00px;font-size:23.0px;color:#000;transform:scaleX(0.9505);-webkit-text-stroke:0.3px #000;">1928,76</span>
<span class="t" style="left:815.35px;top:703.00px;font-size:23.0px;color:#000;transform:scaleX(0.9505);-webkit-text-stroke:0.3px #000;">71954</span>
<span class="t" style="left:43.92px;top:735.00px;font-size:23.0px;color:#000;transform:scaleX(0.8995);-webkit-text-stroke:0.3px #000;">OUEME</span>
<span class="t" style="left:447.26px;top:735.00px;font-size:23.0px;color:#000;transform:scaleX(0.9505);-webkit-text-stroke:0.3px #000;">149359,12</span>
<span class="t" style="left:570.90px;top:735.00px;font-size:23.0px;color:#000;transform:scaleX(0.9505);-webkit-text-stroke:0.3px #000;">13811,88</span>
<span class="t" style="left:803.62px;top:735.00px;font-size:23.0px;color:#000;transform:scaleX(0.9505);-webkit-text-stroke:0.3px #000;">163171</span>
<span class="t" style="left:43.75px;top:767.00px;font-size:23.0px;color:#000;transform:scaleX(0.8738);-webkit-text-stroke:0.3px #000;">PLATEAU</span>
<span class="t" style="left:459.42px;top:767.00px;font-size:23.0px;color:#000;transform:scaleX(0.9505);-webkit-text-stroke:0.3px #000;">79322,82</span>
<span class="t" style="left:581.43px;top:767.00px;font-size:23.0px;color:#000;transform:scaleX(0.9505);-webkit-text-stroke:0.3px #000;">4550,18</span>
<span class="t" style="left:815.67px;top:767.00px;font-size:23.0px;color:#000;transform:scaleX(0.9505);-webkit-text-stroke:0.3px #000;">83873</span>
<span class="t" style="left:43.43px;top:799.00px;font-size:23.0px;color:#000;transform:scaleX(0.9187);-webkit-text-stroke:0.3px #000;">ZOU</span>
<span class="t" style="left:446.81px;top:799.00px;font-size:23.0px;color:#000;transform:scaleX(0.9505);-webkit-text-stroke:0.3px #000;">120851,14</span>
<span class="t" style="left:581.44px;top:799.00px;font-size:23.0px;color:#000;transform:scaleX(0.9505);-webkit-text-stroke:0.3px #000;">4471,86</span>
<span class="t" style="left:803.51px;top:799.00px;font-size:23.0px;color:#000;transform:scaleX(0.9505);-webkit-text-stroke:0.3px #000;">125323</span>
<span class="t" style="left:44.02px;top:831.00px;font-size:23.0px;color:#000;transform:scaleX(0.9679);-webkit-text-stroke:0.3px #000;">(vide)</span>
<span class="t" style="left:43.86px;top:863.00px;font-size:23.0px;color:#000;font-weight:700;transform:scaleX(0.9266);-webkit-text-stroke:0.15px #000;">Total général</span>
<span class="t" style="left:434.98px;top:863.00px;font-size:23.0px;color:#000;font-weight:700;transform:scaleX(0.9505);-webkit-text-stroke:0.15px #000;">1223456,32</span>
<span class="t" style="left:569.10px;top:863.00px;font-size:23.0px;color:#000;font-weight:700;transform:scaleX(0.9505);-webkit-text-stroke:0.15px #000;">81731,68</span>
<span class="t" style="left:791.17px;top:863.00px;font-size:23.0px;color:#000;font-weight:700;transform:scaleX(0.9505);-webkit-text-stroke:0.15px #000;">1305188</span>
<span class="t" style="left:159.24px;top:1347.00px;font-size:23.5px;color:#3b7d4c;font-weight:700;transform:scaleX(0.9913);">Feuil1</span>
<span class="t" style="left:326.63px;top:1346.00px;font-size:24.0px;color:#555;transform:scaleX(1.0569);-webkit-text-stroke:0.3px #555;">data</span>
<span class="t" style="left:480.62px;top:1346.00px;font-size:24.0px;color:#555;transform:scaleX(1.0530);-webkit-text-stroke:0.3px #555;">meta</span>
<span class="t" style="left:1031.40px;top:282.00px;font-size:29.5px;color:#242424;transform:scaleX(1.0668);-webkit-text-stroke:0.4px #242424;">Champs de tableau croisé dynamique</span>
<span class="t" style="left:1023.60px;top:369.00px;font-size:26.0px;color:#b1b1b1;font-weight:700;transform:scaleX(1.0323);">NOM DU CHAMP</span>
<span class="t" style="left:1451.09px;top:372.00px;font-size:22.0px;color:#c2c2c2;transform:scaleX(1.0599);">Rechercher dans</span>
<span class="t" style="left:1065.19px;top:446.00px;font-size:27.0px;color:#ffffff;transform:scaleX(0.9206);-webkit-text-stroke:0.2px #ffffff;">WGT</span>
<span class="t" style="left:1063.68px;top:490.00px;font-size:27.0px;color:#222;transform:scaleX(0.9117);-webkit-text-stroke:0.2px #222;">DEP</span>
<span class="t" style="left:1063.64px;top:534.00px;font-size:27.0px;color:#222;transform:scaleX(0.9286);-webkit-text-stroke:0.2px #222;">DEP_NAME</span>
<div class="a" style="left:1008px;top:568px;width:670px;height:32px;overflow:hidden;">
<span class="t" style="left:56.38px;top:10.00px;font-size:27.0px;color:#222;transform:scaleX(0.9663);-webkit-text-stroke:0.2px #222;">COM</span>
</div>
<span class="t" style="left:1063.87px;top:655.00px;font-size:27.0px;color:#262626;transform:scaleX(1.0070);">Filtres</span>
<span class="t" style="left:1416.73px;top:655.00px;font-size:27.0px;color:#262626;transform:scaleX(0.9980);">Colonnes</span>
<span class="t" style="left:1063.67px;top:996.00px;font-size:27.0px;color:#262626;transform:scaleX(1.0063);">Lignes</span>
<span class="t" style="left:1416.13px;top:996.00px;font-size:27.0px;color:#262626;transform:scaleX(0.9837);">Valeurs</span>
<span class="t" style="left:1367.63px;top:987.00px;font-size:42.0px;color:#676767;font-family:'Liberation Serif',serif;font-weight:700;transform:scaleX(0.9952);">Σ</span>
<span class="t" style="left:1404.02px;top:711.00px;font-size:22.0px;color:#454545;transform:scaleX(1.0972);">voitu</span>
<span class="t" style="left:1050.24px;top:1056.00px;font-size:22.0px;color:#454545;transform:scaleX(0.9756);">DEP_NAME</span>
<span class="t" style="left:1400.98px;top:1056.00px;font-size:22.0px;color:#454545;transform:scaleX(1.0241);">Somme de WGT</span>
<span class="t" style="left:1101.28px;top:1328.00px;font-size:26.0px;color:#b3b3b3;transform:scaleX(1.0389);-webkit-text-stroke:0.3px #b3b3b3;">Faire glisser les champs entre les zones</span>
<div class="a" style="left:1506px;top:1348px;width:210px;height:40px;background:linear-gradient(180deg,#eae8e7,#e3e1e0);border:1px solid #c9c7c6;border-radius:7px;box-shadow:0 -1px 4px rgba(0,0,0,0.28);"></div>
<span class="t" style="left:1532.61px;top:1359.00px;font-size:28.0px;color:#161616;transform:scaleX(1.0468);-webkit-text-stroke:0.35px #161616;">Capture d'éc</span>
</div>
</body></html>
